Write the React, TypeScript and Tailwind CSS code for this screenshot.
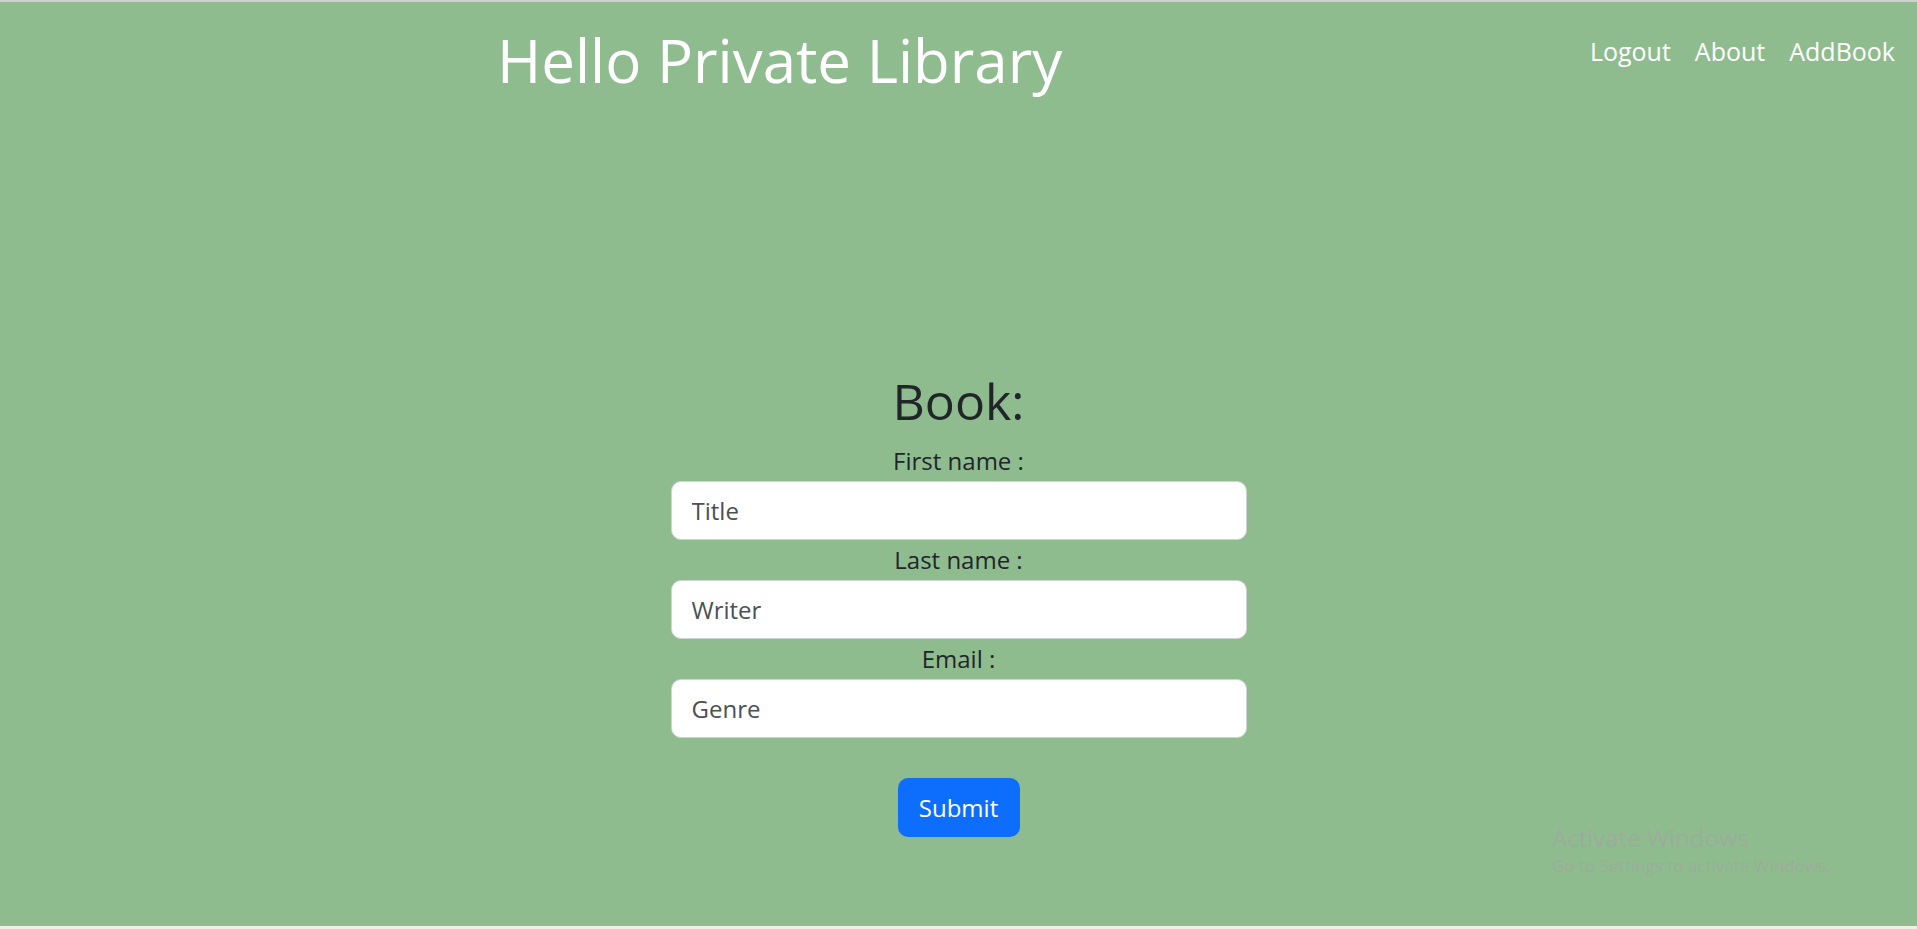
import { useState } from 'react'

const fields = [
  { label: 'First name :', value: 'Title' },
  { label: 'Last name :', value: 'Writer' },
  { label: 'Email :', value: 'Genre' },
]

export default function App() {
  const [values, setValues] = useState(fields.map((f) => f.value))

  return (
    <div className="relative flex h-[929px] w-full flex-col overflow-hidden bg-[#f1eee8] font-['Open_Sans',sans-serif]">
      <div className="h-[2px] bg-[#cfcfcf]" />
      <div className="flex flex-1 flex-col bg-[#8fbc8f]">
        <header className="flex items-start justify-between">
          <h1 className="pl-[497px] pt-[22px] text-[60px] leading-[1.2] text-white">Hello Private Library</h1>
          <nav className="flex gap-[24px] pr-[22px] pt-[31px] text-[25px] text-white">
            <a href="#">Logout</a>
            <a href="#">About</a>
            <a href="#">AddBook</a>
          </nav>
        </header>

        <form
          className="mx-auto mt-[275px] flex w-[576px] flex-col items-center text-[#212529]"
          onSubmit={(e) => e.preventDefault()}
        >
          <h2 className="mb-[10px] text-[50px] leading-[1.2]">Book:</h2>
          {fields.map((f, i) => (
            <div key={f.label} className="flex w-full flex-col items-center">
              <label className="h-[40px] text-[24px] leading-[40px]">{f.label}</label>
              <input
                className="h-[59px] w-full rounded-[10px] border border-[#ced4da] bg-white px-[20px] text-[24px] text-[#495057] outline-none"
                value={values[i]}
                onChange={(e) => setValues(values.map((v, j) => (j === i ? e.target.value : v)))}
              />
            </div>
          ))}
          <button
            type="submit"
            className="mt-[40px] h-[59px] w-[122px] rounded-[10px] bg-[#0d6efd] text-[24px] text-white"
          >
            Submit
          </button>
        </form>
      </div>
      <div className="h-[3px]" />

      <div className="absolute left-[1552px] top-[822px] text-[#9aad99]">
        <div className="text-[24px] leading-[32px]">Activate Windows</div>
        <div className="text-[17px] leading-[24px]">Go to Settings to activate Windows.</div>
      </div>
    </div>
  )
}
